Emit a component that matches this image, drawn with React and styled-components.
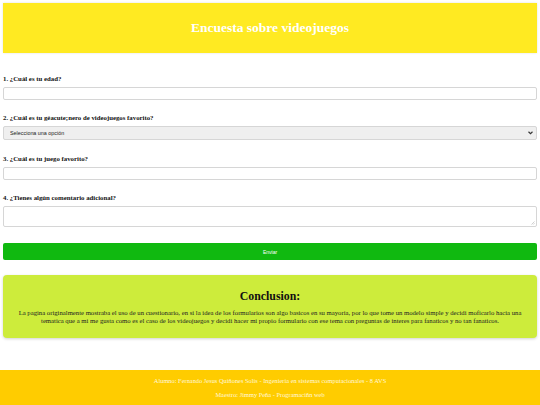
import React from 'react';
import styled, { createGlobalStyle } from 'styled-components';

const GlobalStyle = createGlobalStyle`
  html, body {
    margin: 0;
    padding: 0;
    background: #ffffff;
  }
  body {
    font-family: "Liberation Serif", "Times New Roman", serif;
  }
`

const Page = styled.div`
  display: flex;
  flex-direction: column;
  padding: 3px 3px 0 3px;
`

const Header = styled.header`
  height: 50px;
  display: flex;
  align-items: center;
  justify-content: center;
  background: #ffea22;
  box-shadow: 0 0 2px rgba(0, 0, 0, 0.12);
`

const Title = styled.h1`
  margin: 0;
  font-family: "Liberation Serif", "Times New Roman", serif;
  font-size: 13.5px;
  font-weight: bold;
  color: #ffffff;
`

const Form = styled.form`
  display: flex;
  flex-direction: column;
  padding-top: 22px;
`

const Field = styled.div`
  display: flex;
  flex-direction: column;
  margin-bottom: ${props => props.$gap || 14}px;
`

const Label = styled.label`
  font-size: 6.8px;
  font-weight: bold;
  color: #111;
  margin-bottom: 4px;
  line-height: 8px;
`

const TextInput = styled.input`
  display: block;
  box-sizing: border-box;
  height: 13px;
  width: 100%;
  border: 1px solid #d6d6d6;
  border-radius: 2px;
  background: #fff;
  margin: 0;
  padding: 0;
`

const ControlWrap = styled.div`
  position: relative;
`

const Select = styled.select`
  display: block;
  appearance: none;
  box-sizing: border-box;
  height: 14px;
  width: 100%;
  border: 1px solid #d6d6d6;
  border-radius: 2px;
  background: #efefef;
  font-family: "Liberation Sans", Arial, sans-serif;
  font-size: 5.4px;
  color: #222;
  padding: 0 0 0 6px;
  margin: 0;
`

const Chevron = styled.svg`
  position: absolute;
  right: 4px;
  top: 5px;
  width: 5px;
  height: 4px;
  pointer-events: none;
`

const TextArea = styled.textarea`
  display: block;
  box-sizing: border-box;
  height: 21px;
  width: 100%;
  border: 1px solid #d6d6d6;
  border-radius: 2px;
  resize: none;
  margin: 0;
  padding: 0;
`

const Grip = styled.svg`
  position: absolute;
  right: 2px;
  bottom: 2px;
  width: 4px;
  height: 4px;
  pointer-events: none;
`

const SubmitButton = styled.button`
  height: 17px;
  width: 100%;
  border: none;
  border-radius: 2px;
  background: #10b910;
  color: #ffffff;
  font-family: "Liberation Sans", Arial, sans-serif;
  font-size: 5px;
  margin-top: 2px;
  padding: 0;
`

const Conclusion = styled.section`
  margin-top: 15px;
  height: 63px;
  box-sizing: border-box;
  padding-top: 15px;
  background: #cdec3b;
  border-radius: 4px;
  box-shadow: 0 1px 3px rgba(0, 0, 0, 0.18);
  text-align: center;
`

const ConclusionTitle = styled.h2`
  margin: 0 0 6px 0;
  font-family: "Liberation Serif", "Times New Roman", serif;
  font-size: 11.8px;
  line-height: 13px;
  font-weight: bold;
  color: #111;
`

const ConclusionText = styled.p`
  margin: 0 11px;
  font-size: 6.7px;
  line-height: 8px;
  color: #222;
`

const Footer = styled.footer`
  margin: 32px -3px 0 -3px;
  height: 36px;
  background: #ffcc00;
  display: flex;
  flex-direction: column;
  align-items: center;
  justify-content: center;
  gap: 6px;
`

const FooterLine = styled.p`
  margin: 0;
  font-size: 6.4px;
  line-height: 8px;
  color: #fff8dc;
`

const App = () => {
  return (
    <>
      <GlobalStyle />
      <Page>
        <Header>
          <Title>Encuesta sobre videojuegos</Title>
        </Header>
        <Form onSubmit={e => e.preventDefault()}>
          <Field>
            <Label>1. ¿Cuál es tu edad?</Label>
            <TextInput type="text" />
          </Field>
          <Field $gap={15}>
            <Label>2. ¿Cuál es tu géacute;nero de videojuegos favorito?</Label>
            <ControlWrap>
              <Select defaultValue="">
                <option value="">Selecciona una opción</option>
                <option value="accion">Acción</option>
                <option value="rpg">RPG</option>
              </Select>
              <Chevron viewBox="0 0 10 8">
                <path d="M1 1.5 L5 5.5 L9 1.5" fill="none" stroke="#333" strokeWidth="2.2" />
              </Chevron>
            </ControlWrap>
          </Field>
          <Field>
            <Label>3. ¿Cuál es tu juego favorito?</Label>
            <TextInput type="text" />
          </Field>
          <Field>
            <Label>4. ¿Tienes algún comentario adicional?</Label>
            <ControlWrap>
              <TextArea />
              <Grip viewBox="0 0 8 8">
                <path d="M7 1 L1 7 M7 4.5 L4.5 7" stroke="#999" strokeWidth="0.9" />
              </Grip>
            </ControlWrap>
          </Field>
          <SubmitButton type="submit">Enviar</SubmitButton>
        </Form>
        <Conclusion>
          <ConclusionTitle>Conclusion:</ConclusionTitle>
          <ConclusionText>
            La pagina originalmente mostraba el uso de un cuestionario, en si la idea de los formularios son algo basicos en su mayoria, por lo que tome un modelo simple y decidi moficarlo hacia una tematica que a mi me gusta como es el caso de los videojuegos y decidi hacer mi propio formulario con ese tema con preguntas de interes para fanaticos y no tan fanaticos.
          </ConclusionText>
        </Conclusion>
        <Footer>
          <FooterLine>Alumno: Fernando Jesus Quiñones Solis - Ingenieria en sistemas computacionales - 8 AVS</FooterLine>
          <FooterLine>Maestro: Jimmy Peña - Programaciñn web</FooterLine>
        </Footer>
      </Page>
    </>
  );
}
export default App;
